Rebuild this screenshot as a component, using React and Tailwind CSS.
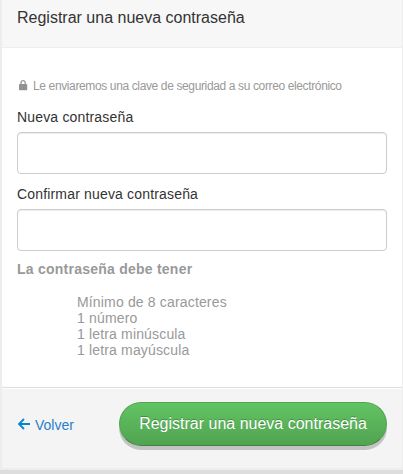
const rules = ["Mínimo de 8 caracteres", "1 número", "1 letra minúscula", "1 letra mayúscula"];

function Field({ id, label }) {
  return (
    <div className="flex flex-col">
      <label htmlFor={id} className="h-[25px] whitespace-nowrap text-[14px] leading-[20px] tracking-[0.17px] text-[#333]">
        {label}
      </label>
      <input
        id={id}
        type="password"
        className="h-[42px] w-full rounded-[4px] border border-[#ccc] bg-white px-3 shadow-[inset_0_1px_1px_rgba(0,0,0,0.075)] outline-none"
      />
    </div>
  );
}

export default function App() {
  return (
    <div className="flex h-[474px] w-[403px] flex-col overflow-hidden bg-[#ddd] font-['Liberation_Sans',Arial,sans-serif]">
      <div className="h-[470px] bg-[#ededed] pl-[2px] pr-px">
        <div className="flex h-[468px] flex-col overflow-hidden rounded-b-[4px] bg-white">
          <header className="h-[48px] border-b border-[#eee] bg-[#f7f7f7] pl-[15px] pt-[7px]">
            <h1 className="whitespace-nowrap text-[16px] leading-[22px] text-[#333]">Registrar una nueva contraseña</h1>
          </header>
          <main className="flex h-[339px] flex-col pl-[15px] pr-[15px] pt-[28px]">
            <p className="flex h-[31px] items-start whitespace-nowrap text-[12px] leading-[20px] tracking-[-0.37px] text-[#999]">
              <svg className="ml-[2px] mr-[5px] mt-[4px] h-[11px] w-[9px] shrink-0" viewBox="0 0 9 11" aria-hidden="true">
                <path d="M2 5V2.8a2.1 2.1 0 0 1 4.2 0V5" fill="none" stroke="#999" strokeWidth="1.3" />
                <rect x="0" y="4" width="8.2" height="6.3" rx="0.8" fill="#929292" />
              </svg>
              Le enviaremos una clave de seguridad a su correo electrónico
            </p>
            <div className="flex flex-col gap-[10px]">
              <Field id="new" label="Nueva contraseña" />
              <Field id="confirm" label="Confirmar nueva contraseña" />
            </div>
            <p className="mt-[8px] whitespace-nowrap text-[14px] font-bold leading-[20px] tracking-[0.24px] text-[#999]">La contraseña debe tener</p>
            <ul className="mt-[15px] pl-[60px] text-[14px] leading-[16px] tracking-[0.16px] text-[#999]">
              {rules.map((r) => (
                <li key={r} className="whitespace-nowrap">{r}</li>
              ))}
            </ul>
          </main>
          <footer className="flex flex-1 items-start justify-between border-t border-[#ddd] bg-[#f4f4f4] pl-[15px] pr-[15px] pt-[14px] shadow-[inset_0_1px_0_#fff]">
            <a href="#" className="mt-[13px] flex items-center whitespace-nowrap text-[14px] leading-[20px] text-[#2a7fc9]">
              <svg className="mb-[2px] mr-[5px] h-[12px] w-[13px]" viewBox="0 0 13 12" fill="none" stroke="#0a84cc" strokeWidth="1.8" aria-hidden="true">
                <path d="M7 1 2 6 7 11M2 6H13" />
              </svg>
              Volver
            </a>
            <button className="h-[44px] w-[268px] whitespace-nowrap rounded-full border border-[#51a351] border-b-[#3d843d] bg-linear-to-b from-[#62c462] to-[#51a351] text-[16px] leading-[20px] text-white shadow-[0_4px_0_#c3c3c3] [text-shadow:0_-1px_0_rgba(0,0,0,0.25)]">
              Registrar una nueva contraseña
            </button>
          </footer>
        </div>
      </div>
    </div>
  );
}
